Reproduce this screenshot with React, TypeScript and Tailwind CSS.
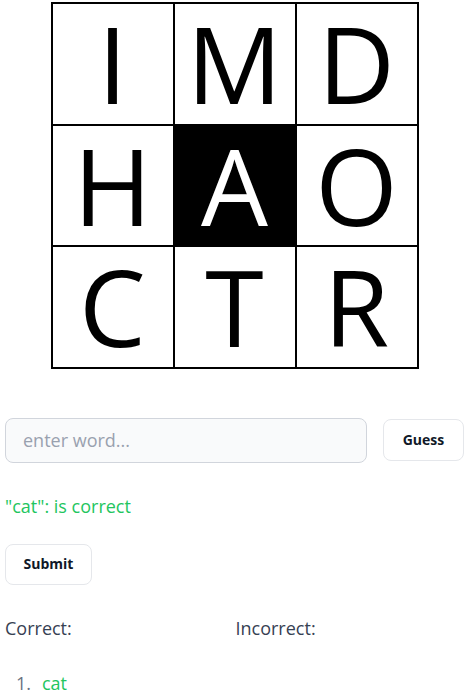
import { useState } from "react";

const letters = ["I", "M", "D", "H", "A", "O", "C", "T", "R"];

export default function App() {
  const [word, setWord] = useState("");
  const correct = ["cat"];
  const incorrect: string[] = [];

  return (
    <div
      className="w-full px-[5px] pr-[4px] text-gray-700"
      style={{ fontFamily: '"Open Sans", "Noto Sans", sans-serif' }}
    >
      <div className="mx-auto mt-[2px] grid w-fit grid-cols-3 border-l-2 border-t-2 border-black">
        {letters.map((l, i) => (
          <div
            key={i}
            className={
              i === 4
                ? "flex h-[121.5px] w-[122px] items-center justify-center border-b-2 border-r-2 border-black bg-black text-white"
                : "flex h-[121.5px] w-[122px] items-center justify-center border-b-2 border-r-2 border-black bg-white text-black"
            }
          >
            <span className="text-[106px] font-medium leading-[1.1]">{l}</span>
          </div>
        ))}
      </div>

      <div className="mt-[49px] flex items-center gap-4">
        <input
          type="text"
          value={word}
          onChange={(e) => setWord(e.target.value)}
          placeholder="enter word..."
          className="h-[45px] flex-1 rounded-lg border border-gray-300 bg-gray-50 px-[17px] text-lg text-gray-900 placeholder:text-gray-400"
        />
        <button className="h-[42px] w-[81px] rounded-lg border border-gray-200 bg-white text-sm font-bold text-gray-900">
          Guess
        </button>
      </div>

      <p className="mt-[31px] text-lg leading-6 text-[#22c55e]">"cat": is correct</p>

      <button className="mt-[26px] h-[41px] w-[87px] rounded-lg border border-gray-200 bg-white text-sm font-bold text-gray-900">
        Submit
      </button>

      <div className="mt-[29px] grid grid-cols-2">
        <div>
          <h2 className="text-lg leading-7">Correct:</h2>
          <ol className="mt-[27px] pl-[11px] text-lg">
            {correct.map((w, i) => (
              <li key={w} className="flex">
                <span className="w-[26px] text-gray-500">{i + 1}.</span>
                <span className="text-[#22c55e]">{w}</span>
              </li>
            ))}
          </ol>
        </div>
        <div className="pl-[1px]">
          <h2 className="text-lg leading-7">Incorrect:</h2>
          <ol className="mt-[27px] pl-[11px] text-lg">
            {incorrect.map((w, i) => (
              <li key={w} className="flex">
                <span className="w-[26px] text-gray-500">{i + 1}.</span>
                <span className="text-red-500">{w}</span>
              </li>
            ))}
          </ol>
        </div>
      </div>
    </div>
  );
}
